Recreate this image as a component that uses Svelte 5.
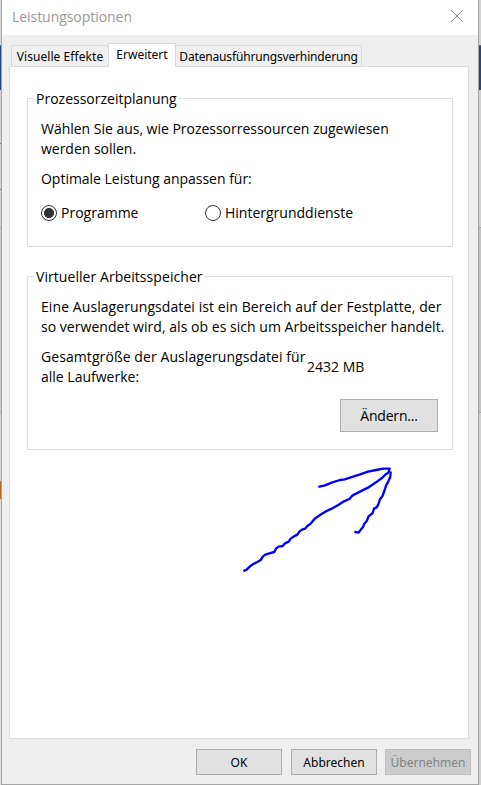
<script>
	let mode = $state("programs");

	const tabs = [
		{ label: "Visuelle Effekte", name: "effects" },
		{ label: "Erweitert", name: "advanced" },
		{ label: "Datenausführungsverhinderung", name: "dep" }
	];
	let active = $state("advanced");
</script>

<div class="desktop">
	<div class="window">
		<header>
			<span class="title">Leistungsoptionen</span>
			<svg class="close" width="14" height="14" viewBox="0 0 14 14">
				<path d="M1 1L13 13M13 1L1 13" />
			</svg>
		</header>

		<nav>
			{#each tabs as tab}
				<button class="tab {tab.name}" class:active={active == tab.name} onclick={() => (active = tab.name)}>
					<span>{tab.label}</span>
				</button>
			{/each}
		</nav>

		<main>
			<section class="group cpu">
				<h2>Prozessorzeitplanung</h2>
				<p>Wählen Sie aus, wie Prozessorressourcen zugewiesen<br />werden sollen.</p>
				<p>Optimale Leistung anpassen für:</p>
				<div class="radios">
					<label>
						<input type="radio" bind:group={mode} value="programs" />
						<span>Programme</span>
					</label>
					<label>
						<input type="radio" bind:group={mode} value="services" />
						<span>Hintergrunddienste</span>
					</label>
				</div>
			</section>

			<section class="group memory">
				<h2>Virtueller Arbeitsspeicher</h2>
				<p><span class="wide">Eine Auslagerungsdatei ist ein Bereich auf der Festplatte, der</span><br /><span class="medium">so verwendet wird, als ob es sich um Arbeitsspeicher handelt.</span></p>
				<div class="total">
					<p><span class="wide">Gesamtgröße der Auslagerungsdatei für</span><br />alle Laufwerke:</p>
					<span>2432 MB</span>
				</div>
				<button class="change">Ändern...</button>
			</section>
		</main>

		<footer>
			<button>OK</button>
			<button>Abbrechen</button>
			<button disabled>Übernehmen</button>
		</footer>
	</div>

	<!-- hand-drawn arrow pointing at the button -->
	<svg class="arrow" width="180" height="130" viewBox="0 0 540 390">
		<path d="M43 347L50 344L60 334L70 327L82 321L92 315L99 304L106 299L118 295L133 291L138 281L146 275L158 273L165 265L176 260L182 251L192 244L202 239L208 230L216 224L225 221L232 213L243 205L254 191L270 180L286 170L305 161L326 149L342 139L358 132L368 121L390 110L414 98L438 82L456 69L467 58L475 53L479 41L460 41L438 45L414 50L388 59L360 68L344 73L330 75L305 83L285 91L268 95" />
		<path d="M482 52L481 65L475 79L468 92L463 108L457 124L450 133L445 148L440 157L432 161L428 174L416 184L410 198L403 206L399 216L391 226L386 233L376 231" />
	</svg>
</div>

<style>
	:global(body) {
		margin: 0;
		overflow: hidden;
	}

	.desktop {
		position: relative;
		box-sizing: border-box;
		width: 481px;
		height: 785px;
		padding: 0 2px 0 1px;
		background:
			linear-gradient(#d9d9d9 45px, #5b6f8d 45px 46px, #1f4788 46px 90px, #d2d2d2 90px 143px, #55798c 143px 144px, #d2d2d2 144px 189px, #55798c 189px 190px, #d2d2d2 190px 227px, #a5a5a5 227px 228px, #c8c8c8 228px 412px, #a0a0a0 412px 413px, #d5d5d5 413px 481px, #b56d20 481px 499px, #ddd 499px) left / 1px 100% no-repeat,
			linear-gradient(#d2d2d2 45px, #5b6f8d 45px 46px, #24487c 46px 90px, #d0d0d0 90px 227px, #a5a5a5 227px 228px, #c3c3c3 228px 412px, #a5a5a5 412px 413px, #d0d0d0 413px);
		font-family: "Open Sans", "Noto Sans", sans-serif;
		font-size: 14px;
		color: #000;
	}

	.window {
		box-sizing: border-box;
		height: 785px;
		border: 1px solid #a5a5a5;
		border-top: 0;
		background: #efefef;
		display: flex;
		flex-direction: column;
	}

	span,
	p,
	h2 {
		white-space: nowrap;
	}

	header {
		display: flex;
		justify-content: space-between;
		height: 35px;
		padding: 0 14px 0 10px;
		background: #fff;
	}

	.title {
		line-height: 34px;
		letter-spacing: -0.05px;
		color: #999;
	}

	.close {
		margin-top: 9px;
		stroke: #888;
	}

	nav {
		display: flex;
		align-items: flex-end;
		height: 31px;
		padding-left: 9px;
	}

	button {
		box-sizing: border-box;
		display: flex;
		align-items: center;
		justify-content: center;
		padding: 0;
		border: 1px solid #adadad;
		background: #e1e1e1;
		color: #000;
		font: 12px "Noto Sans", sans-serif;
	}

	.tab {
		height: 21px;
		border: 1px solid #d9d9d9;
		border-bottom: 0;
		background: #f0f0f0;
	}

	.effects {
		width: 97px;
		border-right: 0;
		letter-spacing: 0.06px;
	}

	.dep {
		width: 186px;
		border-left: 0;
		letter-spacing: -0.16px;
	}

	.tab.active {
		width: 68px;
		height: 24px;
		margin-bottom: -1px;
		padding-bottom: 2px;
		background: #fff;
		z-index: 1;
	}

	main {
		box-sizing: border-box;
		width: 460px;
		height: 673px;
		margin-left: 7px;
		padding: 31px 15px 0 17px;
		border: 1px solid #dcdcdc;
		background: #fff;
	}

	.group {
		box-sizing: border-box;
		width: 426px;
		border: 1px solid #dcdcdc;
		padding: 0 14px 0 13px;
		line-height: 20px;
	}

	.cpu {
		height: 149px;
	}

	.cpu p {
		letter-spacing: -0.02px;
	}

	.memory {
		height: 174px;
		margin-top: 29px;
	}

	h2 {
		width: fit-content;
		margin: -10px 0 10px -7px;
		padding: 0 2px;
		background: #fff;
		font-size: 14px;
		font-weight: normal;
		line-height: 20px;
	}

	.memory h2 {
		letter-spacing: 0.06px;
	}

	p {
		margin: 0 0 10px;
	}

	.wide {
		letter-spacing: 0.08px;
	}

	.medium {
		letter-spacing: 0.035px;
	}

	.radios {
		display: grid;
		grid-template-columns: 164px auto;
		margin-top: 14px;
	}

	label {
		display: flex;
		align-items: center;
	}

	input {
		appearance: none;
		box-sizing: border-box;
		width: 16px;
		height: 16px;
		margin: 0 4px 0 0;
		border: 1px solid #333;
		border-radius: 50%;
		background: #fff;
	}

	input:checked {
		background: radial-gradient(#333 4.7px, #fff 5.3px);
	}

	.total {
		display: grid;
		grid-template-columns: 266px auto;
		align-items: center;
	}

	.total p {
		margin: 0;
	}

	.change {
		width: 98px;
		height: 33px;
		margin: 12px 0 0 auto;
		font: 14px "Open Sans", sans-serif;
		letter-spacing: -0.2px;
	}

	footer {
		display: flex;
		gap: 9px;
		padding: 10px 0 0 194px;
	}

	footer button {
		width: 86px;
		height: 26px;
	}

	footer button:disabled {
		margin-left: -1px;
		background: #ccc;
		border-color: #bfbfbf;
		color: #838383;
	}

	.arrow {
		position: absolute;
		left: 230px;
		top: 455px;
		fill: none;
		stroke: #00f;
		stroke-width: 7;
		stroke-linecap: round;
		stroke-linejoin: round;
		pointer-events: none;
	}
</style>
